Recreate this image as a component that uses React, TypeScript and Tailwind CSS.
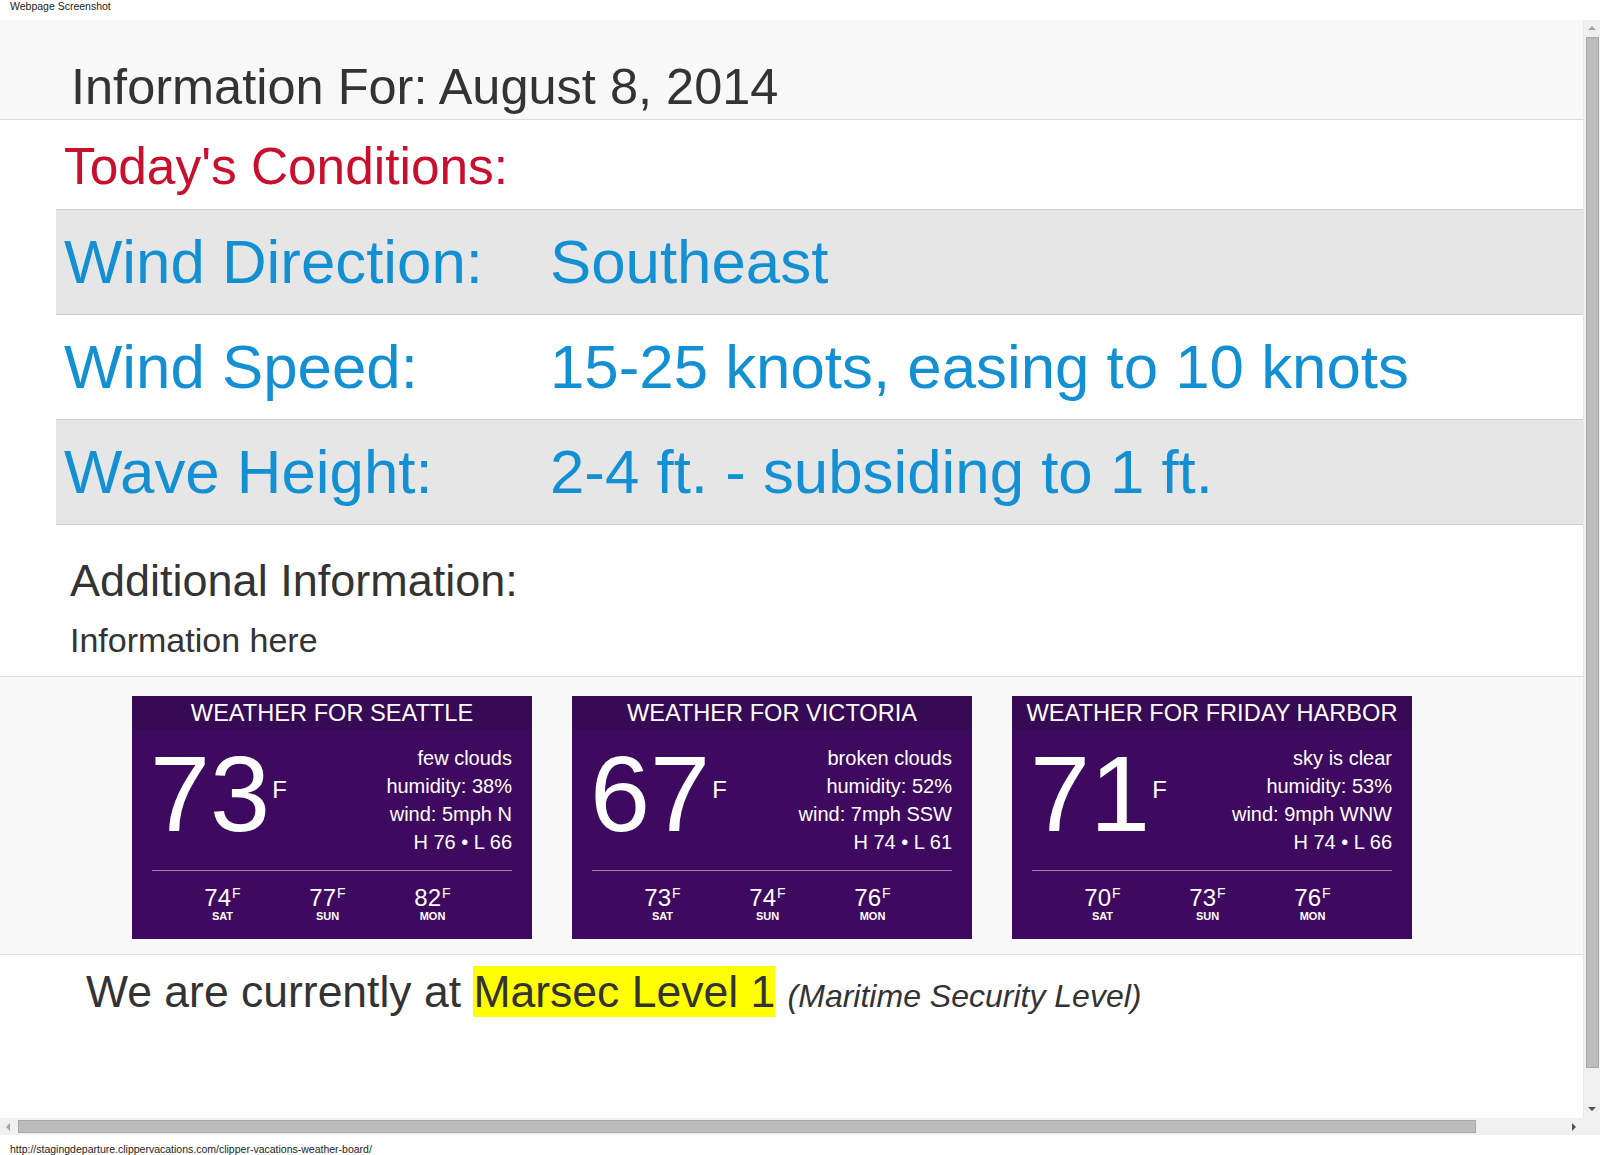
import React from "react";

type Fc = { t: string; d: string };
type Wx = {
  city: string;
  temp: string;
  lines: string[];
  fc: Fc[];
};

const data: Wx[] = [
  {
    city: "WEATHER FOR SEATTLE",
    temp: "73",
    lines: ["few clouds", "humidity: 38%", "wind: 5mph N", "H 76 • L 66"],
    fc: [
      { t: "74", d: "SAT" },
      { t: "77", d: "SUN" },
      { t: "82", d: "MON" },
    ],
  },
  {
    city: "WEATHER FOR VICTORIA",
    temp: "67",
    lines: ["broken clouds", "humidity: 52%", "wind: 7mph SSW", "H 74 • L 61"],
    fc: [
      { t: "73", d: "SAT" },
      { t: "74", d: "SUN" },
      { t: "76", d: "MON" },
    ],
  },
  {
    city: "WEATHER FOR FRIDAY HARBOR",
    temp: "71",
    lines: ["sky is clear", "humidity: 53%", "wind: 9mph WNW", "H 74 • L 66"],
    fc: [
      { t: "70", d: "SAT" },
      { t: "73", d: "SUN" },
      { t: "76", d: "MON" },
    ],
  },
];

function Widget({ w }: { w: Wx }) {
  return (
    <div className="w-[400px] h-[243px] bg-[#3e0a5f] text-white flex flex-col">
      <div className="h-[34px] bg-[#360a55] pt-[4px] text-center text-[23.6px] leading-[27px] whitespace-nowrap">
        {w.city}
      </div>
      <div className="px-[20px] flex flex-col">
        <div className="flex items-start justify-between">
          <div className="flex items-start mt-[10px] -ml-[2px]">
            <span className="text-[108px] leading-[108px]">{w.temp}</span>
            <span className="text-[24px] leading-[24px] mt-[38px] ml-[2px]">F</span>
          </div>
          <div className="mt-[14px] text-right text-[20px] leading-[28px]">
            {w.lines.map((l) => (
              <div key={l}>{l}</div>
            ))}
          </div>
        </div>
        <div className="mt-[14px] h-px bg-[#9b86aa]" />
        <div className="flex ml-[18px] mt-[15px]">
          {w.fc.map((f) => (
            <div key={f.d} className="w-[105px] flex flex-col items-center">
              <div className="flex items-start">
                <span className="text-[24px] leading-[24px]">{f.t}</span>
                <span className="text-[14px] leading-[14px] ml-[1px]">F</span>
              </div>
              <div className="mt-[1px] text-[11px] leading-[11px] font-bold">{f.d}</div>
            </div>
          ))}
        </div>
      </div>
    </div>
  );
}

function Row({ label, value, gray }: { label: string; value: string; gray: boolean }) {
  return (
    <div
      className={`h-[105px] border-t border-[#cfcfcf] pl-[8px] grid grid-cols-[486px_1fr] items-center text-[61.8px] leading-[72px] text-[#1390d3] whitespace-nowrap ${
        gray ? "bg-[#e6e6e6]" : "bg-white"
      }`}
    >
      <div>{label}</div>
      <div>{value}</div>
    </div>
  );
}

export default function App() {
  return (
    <div className="w-[1600px] h-[1155px] bg-white overflow-hidden font-['Liberation_Sans',Arial,sans-serif] text-[#333]">
      {/* top strip */}
      <div className="h-[20px] pl-[10px] pt-[1px]">
        <div className="text-[10.5px] leading-[10px] text-[#222] whitespace-nowrap">Webpage Screenshot</div>
      </div>

      <div className="flex h-[1098px]">
        {/* viewport */}
        <div className="flex-1 overflow-hidden bg-white">
          <div className="h-[100px] bg-[#f8f8f8] border-b border-[#dddddd] pl-[71px] pt-[38px]">
            <h1 className="text-[50.5px] leading-[57px] whitespace-nowrap">Information For: August 8, 2014</h1>
          </div>

          <h2 className="mt-[17px] pl-[64px] text-[51.4px] leading-[58px] text-[#c8102e] whitespace-nowrap">Today's Conditions:</h2>

          <div className="ml-[56px] mt-[14px] border-b border-[#cfcfcf]">
            <Row label="Wind Direction:" value="Southeast" gray />
            <Row label="Wind Speed:" value="15-25 knots, easing to 10 knots" gray={false} />
            <Row label="Wave Height:" value="2-4 ft. - subsiding to 1 ft." gray />
          </div>

          <h3 className="mt-[30px] pl-[70px] text-[45px] leading-[52px] whitespace-nowrap">Additional Information:</h3>
          <p className="mt-[14px] pl-[70px] text-[34px] leading-[39px] whitespace-nowrap">Information here</p>

          <div className="mt-[16px] border-t border-b border-[#dddddd] bg-[#f8f8f8] pl-[132px] pt-[19px] pb-[15px] flex gap-[40px]">
            {data.map((w) => (
              <Widget key={w.city} w={w} />
            ))}
          </div>

          <div className="pt-[4px] pl-[86px] whitespace-nowrap text-[44.5px]">
            <span>We are currently at </span>
            <span className="bg-[#ffff00] py-[1px]">Marsec Level 1</span>{" "}
            <em className="text-[32px] italic">(Maritime Security Level)</em>
          </div>
        </div>

        {/* vertical scrollbar */}
        <div className="w-[17px] bg-[#f0f0f0] border-l border-[#e8e8e8] flex flex-col items-center">
          <div className="h-[17px] w-full flex items-center justify-center">
            <svg width="8" height="5" viewBox="0 0 8 5">
              <polygon points="4,0 8,4 0,4" fill="#a3a3a3" />
            </svg>
          </div>
          <div className="w-[13px] h-[1031px] bg-[#bcbcbc] border border-[#a8a8a8]" />
          <div className="flex-1" />
          <div className="h-[17px] w-full flex items-center justify-center">
            <svg width="8" height="5" viewBox="0 0 8 5">
              <polygon points="0,0 8,0 4,4" fill="#505050" />
            </svg>
          </div>
        </div>
      </div>

      {/* horizontal scrollbar */}
      <div className="h-[17px] bg-[#f0f0f0] flex items-center">
        <div className="w-[17px] h-full flex items-center justify-center">
          <svg width="5" height="8" viewBox="0 0 5 8">
            <polygon points="4,0 4,8 0,4" fill="#a3a3a3" />
          </svg>
        </div>
        <div className="ml-[1px] w-[1458px] h-[13px] bg-[#bcbcbc] border border-[#a8a8a8]" />
        <div className="flex-1" />
        <div className="w-[17px] h-full flex items-center justify-center">
          <svg width="5" height="8" viewBox="0 0 5 8">
            <polygon points="0,0 4,4 0,8" fill="#505050" />
          </svg>
        </div>
        <div className="w-[17px] h-full" />
      </div>

      {/* url strip */}
      <div className="pl-[10px] pt-[9px]">
        <div className="text-[10.5px] leading-[10px] text-[#222] whitespace-nowrap">
          http://stagingdeparture.clippervacations.com/clipper-vacations-weather-board/
        </div>
      </div>
    </div>
  );
}
